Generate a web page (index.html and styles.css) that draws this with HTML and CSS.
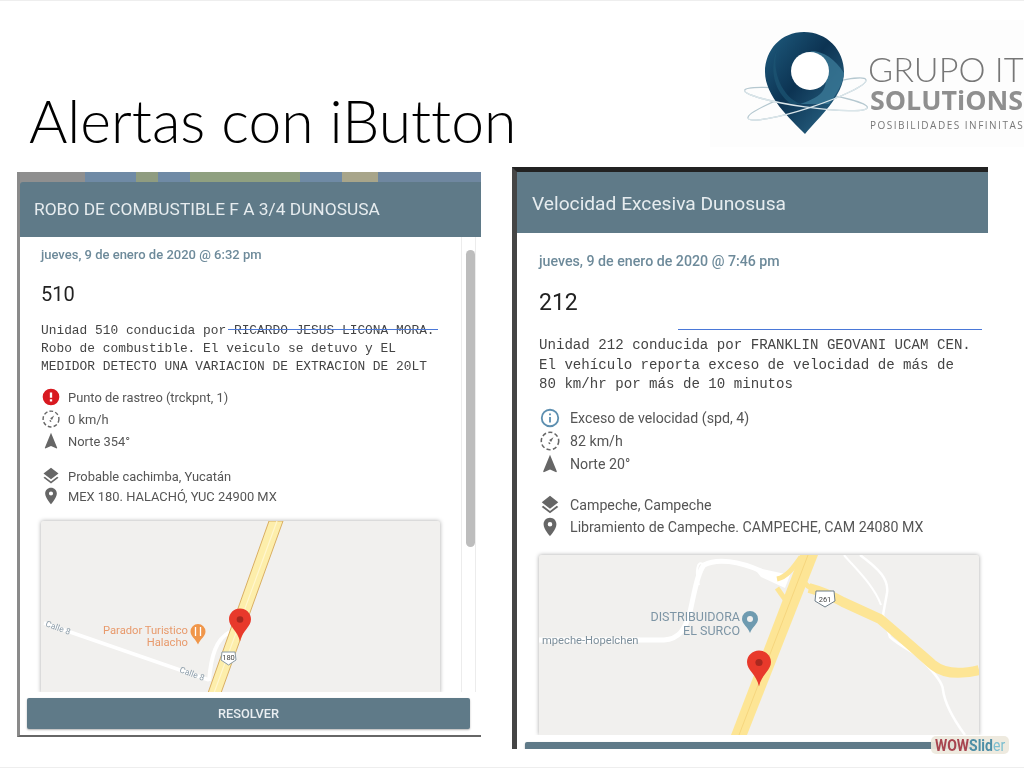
FILE: index.html
```html
<!DOCTYPE html>
<html lang="es">

<head>
    <meta charset="UTF-8">
    <meta name="viewport" content="width=device-width, initial-scale=1.0">
    <title>Alertas con iButton</title>
    <link rel="stylesheet" href="styles.css">
</head>

<body>
    <svg class="icon-defs" width="0" height="0">
        <symbol id="i-error" viewBox="0 0 24 24"><path fill="#d81920" d="M12 2a10 10 0 1 0 0 20 10 10 0 0 0 0-20zm1.4 15.4h-2.8v-2.6h2.8zm0-4.6h-2.8V6.600h2.800z"/></symbol>
        <symbol id="i-info" viewBox="0 0 24 24"><path fill="#5d8fb0" d="M11 7h2v2h-2zm0 4h2v6h-2zm1-9a10 10 0 1 0 0 20 10 10 0 0 0 0-20zm0 18a8 8 0 1 1 0-16 8 8 0 0 1 0 16z"/></symbol>
        <symbol id="i-speed" viewBox="0 0 24 24"><circle cx="12" cy="12" r="9.5" fill="none" stroke="#666" stroke-width="1.7" stroke-dasharray="4.5 2.6"/><path fill="#666" d="M15.8 7.8l-2.6 5.4-2.2-2.2zM11 13a1.2 1.2 0 1 0 1.6 1.6z"/></symbol>
        <symbol id="i-nav" viewBox="0 0 24 24"><path fill="#666" d="M12 2L4.5 20.3l.7.7L12 18l6.8 3 .7-.7z"/></symbol>
        <symbol id="i-layers" viewBox="0 0 24 24"><path fill="#666" d="M12 18.5l-7.4-5.7L3 14.1l9 7 9-7-1.6-1.3zM12 16l7.4-5.7L21 9l-9-7-9 7 1.6 1.3z"/></symbol>
        <symbol id="i-place" viewBox="0 0 24 24"><path fill="#666" d="M12 2C8.1 2 5 5.1 5 9c0 5.3 7 13 7 13s7-7.7 7-13c0-3.9-3.1-7-7-7zm0 9.5a2.5 2.5 0 1 1 0-5 2.5 2.5 0 0 1 0 5z"/></symbol>
        <symbol id="i-marker" viewBox="0 0 24 36"><path fill="#e8392b" d="M12 0C5.4 0 0 5.2 0 11.6 0 20 9.5 24 12 36 14.5 24 24 20 24 11.6 24 5.2 18.6 0 12 0z"/><circle cx="12" cy="12" r="3.6" fill="#a8281f"/></symbol>
    </svg>

    <div class="slide">
        <div class="slide-head">
            <h1 class="slide-title">Alertas con iButton</h1>
            <div class="logo">
                <svg class="logo-mark" viewBox="0 0 160 127">
                    <defs>
                        <linearGradient id="pinGrad" x1="0" y1="0" x2="1" y2="1">
                            <stop offset="0" stop-color="#1f5d80"/>
                            <stop offset=".45" stop-color="#0c3352"/>
                            <stop offset="1" stop-color="#2f6d8e"/>
                        </linearGradient>
                    </defs>
                    <g fill="none" stroke="#b5c8d0" stroke-width="1.300">
                        <ellipse cx="97" cy="79" rx="62" ry="9" transform="rotate(-18 97 79)"/>
                        <ellipse cx="96" cy="79" rx="62" ry="8" transform="rotate(8 96 79)"/>
                    </g>
                    <path fill="url(#pinGrad)" d="M94 12C71 12 55 30 55 52c0 24 25 47 40 62 14-17 39-38 39-62 0-22-17-40-40-40z"/>
                    <path fill="#3a7896" opacity=".8" d="M100 31c14 0 25 8 34 22-1 10-6 19-15 31H90c6-2 17-6 22-12 8-10 4-32-12-41z"/>
                    <path fill="#1d5573" d="M67 30c-8 18-3 42 14 54h10c-18-6-30-32-24-54z" opacity=".7"/>
                    <circle cx="100" cy="51" r="19" fill="#fff"/>
                    <g fill="none" stroke="#dbe6ea" stroke-width="1.300">
                        <path d="M-62 0A62 9 0 0 0 62 0" transform="translate(97 79) rotate(-18)"/>
                        <path d="M-62 0A62 8 0 0 0 62 0" transform="translate(96 79) rotate(8)"/>
                    </g>
                </svg>
                <div class="logo-text">
                    <div class="logo-name">GRUPO IT</div>
                    <div class="logo-sub">SOLUTiONS</div>
                    <div class="logo-tag">POSIBILIDADES INFINITAS</div>
                </div>
            </div>
        </div>

        <div class="panels">
            <section class="panel panel-left">
                <header class="panel-head">ROBO DE COMBUSTIBLE F A 3/4 DUNOSUSA</header>
                <div class="panel-main">
                    <div class="panel-body">
                        <div class="date">jueves, 9 de enero de 2020 @ 6:32 pm</div>
                        <div class="unit">510</div>
                        <p class="message">Unidad 510 conducida por RICARDO JESUS LICONA MORA.<br>Robo de combustible. El veiculo se detuvo y EL<br>MEDIDOR DETECTO UNA VARIACION DE EXTRACION DE 20LT</p>
                        <ul class="rows">
                            <li><svg class="icon"><use href="#i-error"/></svg>Punto de rastreo (trckpnt, 1)</li>
                            <li><svg class="icon"><use href="#i-speed"/></svg>0 km/h</li>
                            <li><svg class="icon"><use href="#i-nav"/></svg>Norte 354°</li>
                        </ul>
                        <ul class="rows rows-place">
                            <li><svg class="icon"><use href="#i-layers"/></svg>Probable cachimba, Yucatán</li>
                            <li><svg class="icon"><use href="#i-place"/></svg>MEX 180. HALACHÓ, YUC 24900 MX</li>
                        </ul>
                        <div class="map">
                            <svg class="map-svg" viewBox="0 0 399 172">
                                <path d="M3 102L168 159" stroke="#fff" stroke-width="3.500" fill="none"/>
                                <path d="M168 160C170 135 175 118 189 111" stroke="#fff" stroke-width="4" fill="none"/>
                                <path d="M228 0H242L180 172H167z" fill="#fdeeab" stroke="#d9ae62" stroke-width="1"/>
                                <path d="M236 0L173 172" stroke="#fff6cf" stroke-width="1.200"/>
                                <text class="map-road" transform="translate(4 105) rotate(20)">Calle 8</text>
                                <text class="map-road" transform="translate(138 151) rotate(20)">Calle 8</text>
                                <text class="map-poi" x="147" y="113" text-anchor="end">Parador Turistico</text>
                                <text class="map-poi" x="147" y="125" text-anchor="end">Halacho</text>
                                <path d="M157 103a7.500 7.500 0 0 0-7.500 7.500c0 5 5 7 7.500 13 2.500-6 7.500-8 7.500-13a7.500 7.500 0 0 0-7.500-7.500z" fill="#f0964a"/>
                                <path d="M154.500 106v9M159.500 106v9" stroke="#fff" stroke-width="1.300"/>
                                <path d="M181 131h13l1 8-7.500 5-7.500-5z" fill="#fff" stroke="#8a9aa5"/>
                                <text class="map-shield" x="187.500" y="139" text-anchor="middle">180</text>
                                <use href="#i-marker" x="188" y="87" width="22" height="34"/>
                            </svg>
                        </div>
                    </div>
                    <div class="scrollbar"><div class="scroll-thumb"></div></div>
                </div>
                <footer class="panel-foot"><button class="resolve">RESOLVER</button></footer>
                <div class="pen-line"></div>
            </section>

            <section class="panel panel-right">
                <header class="panel-head">Velocidad Excesiva Dunosusa</header>
                <div class="panel-main">
                    <div class="panel-body">
                        <div class="date">jueves, 9 de enero de 2020 @ 7:46 pm</div>
                        <div class="unit">212</div>
                        <p class="message">Unidad 212 conducida por FRANKLIN GEOVANI UCAM CEN.<br>El vehículo reporta exceso de velocidad de más de<br>80 km/hr por más de 10 minutos</p>
                        <ul class="rows">
                            <li><svg class="icon"><use href="#i-info"/></svg>Exceso de velocidad (spd, 4)</li>
                            <li><svg class="icon"><use href="#i-speed"/></svg>82 km/h</li>
                            <li><svg class="icon"><use href="#i-nav"/></svg>Norte 20°</li>
                        </ul>
                        <ul class="rows rows-place">
                            <li><svg class="icon"><use href="#i-layers"/></svg>Campeche, Campeche</li>
                            <li><svg class="icon"><use href="#i-place"/></svg>Libramiento de Campeche. CAMPECHE, CAM 24080 MX</li>
                        </ul>
                        <div class="map">
                            <svg class="map-svg" viewBox="0 0 440 180">
                                <g fill="none" stroke="#fff">
                                    <path d="M222 16C200 6 178 3 165 10 158 18 155 40 151 57 146 75 140 84 125 85H0" stroke-width="5"/>
                                    <path d="M165 10C158 3 156 18 160 30" stroke-width="2"/>
                                    <path d="M321 0C340 14 350 24 348 38L344 60 351 82C362 92 374 96 381 103 396 118 404 128 404 135 406 150 415 165 426 180" stroke-width="2.500"/>
                                    <path d="M305 0C315 12 335 30 342 50" stroke-width="2"/>
                                </g>
                                <path d="M214 12L251 20 246 33 222 22z" fill="#fff"/>
                                <g fill="none" stroke="#fde595">
                                    <path d="M270 33C285 37 295 42 304 47L341 64C360 80 378 96 394 110 404 118 420 120 440 115" stroke-width="10"/>
                                    <path d="M238 24C248 22 255 12 262 2" stroke-width="5"/>
                                    <path d="M238 33L250 50" stroke-width="5"/>
                                    <path d="M264 25C268 32 272 34 280 34" stroke-width="5"/>
                                </g>
                                <path d="M261 0H279L208 180H192z" fill="#fde595"/>
                                <path d="M269 0L200 180" stroke="#f6d67e" stroke-width="1"/>
                                <text class="map-label" x="201" y="66" text-anchor="end">DISTRIBUIDORA</text>
                                <text class="map-label" x="201" y="80" text-anchor="end">EL SURCO</text>
                                <text class="map-road-name" x="3" y="89">mpeche-Hopelchen</text>
                                <path d="M211 56a8 8 0 0 0-8 8c0 5 6 8 8 14 2-6 8-9 8-14a8 8 0 0 0-8-8z" fill="#6f9bb0"/>
                                <circle cx="211" cy="64" r="3" fill="#f1f0ee"/>
                                <path d="M277 36h18l1 10-10 6-10-6z" fill="#fff" stroke="#6f7f8a"/>
                                <text class="map-shield" x="286" y="47" text-anchor="middle">261</text>
                                <use href="#i-marker" x="208" y="94" width="24" height="39"/>
                            </svg>
                        </div>
                    </div>
                </div>
                <footer class="panel-foot"><button class="resolve"></button></footer>
                <div class="pen-line"></div>
            </section>
        </div>

        <div class="wow-badge"><span class="wow-text"><span class="wow-a">WOW</span><span class="wow-b">Slid</span><span class="wow-c">er</span></span></div>
    </div>
</body>

</html>
```

FILE: styles.css
```css
/* Slide */
body {
    margin: 0;
    padding: 0;
    background-color: #fff;
    font-family: Roboto, Arial, sans-serif;
}

.icon-defs {
    position: absolute;
}

.slide {
    position: relative;
    width: 1024px;
    height: 768px;
    box-sizing: border-box;
    overflow: hidden;
    background-color: #fff;
    border-top: 1px solid #eee;
    border-bottom: 1px solid #eee;
    filter: blur(0.4px);
}

.slide-head {
    display: flex;
    justify-content: space-between;
    height: 166px;
}

.slide-title {
    margin: 0;
    padding: 85px 0 0 29px;
    font-family: Lato, sans-serif;
    font-weight: 300;
    font-size: 58.8px;
    font-variant-ligatures: none;
    line-height: 70px;
    white-space: nowrap;
    color: #000;
}

/* Logo */
.logo {
    display: flex;
    flex-shrink: 0;
    width: 314px;
    height: 127px;
    margin-top: 19px;
    background-color: #fdfdfd;
}

.logo-mark {
    flex-shrink: 0;
    width: 160px;
    height: 127px;
}

.logo-text {
    color: #8a8a8a;
    white-space: nowrap;
}

.logo-name {
    margin: 31px 0 0 -2px;
    font-family: Lato, sans-serif;
    font-weight: 300;
    font-size: 34.2px;
    line-height: 36px;
    color: #777;
}

.logo-sub {
    margin-top: -2px;
    font-family: "Open Sans", sans-serif;
    font-weight: 700;
    font-size: 26.8px;
    line-height: 30px;
    color: #8f8f8f;
}

.logo-tag {
    margin-top: 3px;
    font-family: "Open Sans", sans-serif;
    font-size: 10px;
    line-height: 14px;
    letter-spacing: 1.5px;
    color: #777;
}

/* Panels */
.panels {
    display: flex;
    gap: 31px;
    padding-left: 17px;
}

.panel {
    position: relative;
    display: flex;
    flex-direction: column;
    box-sizing: border-box;
    overflow: hidden;
    background-color: #fff;
}

.panel-head {
    flex-shrink: 0;
    display: flex;
    align-items: center;
    box-sizing: border-box;
    background-color: #5f7a88;
    color: #e6ecef;
}

.panel-main {
    display: flex;
    flex: 1;
    min-height: 0;
    overflow: hidden;
}

.panel-body {
    flex: 1;
    min-width: 0;
}

.date {
    font-weight: 500;
    color: #6d8a9a;
    line-height: 18px;
}

.unit {
    color: #222;
}

.message {
    margin: 0;
    font-family: "Liberation Mono", monospace;
    color: #444;
    white-space: nowrap;
}

.rows {
    margin: 0;
    padding: 0;
    list-style: none;
    color: #555;
}

.rows li {
    display: flex;
    align-items: center;
    white-space: nowrap;
}

.map {
    background-color: #f1f0ee;
    box-shadow: 0 0 4px rgba(0, 0, 0, 0.35);
    border-radius: 2px 2px 0 0;
}

.map-svg {
    display: block;
    width: 100%;
    height: 100%;
}

.map-road {
    font-size: 8.5px;
    fill: #8a9ba8;
}

.map-poi {
    font-size: 11.2px;
    fill: #e89a6c;
}

.map-label {
    font-size: 12.5px;
    fill: #7d95a5;
}

.map-road-name {
    font-size: 11.2px;
    fill: #7d8f9b;
}

.map-shield {
    font-size: 7.5px;
    fill: #444;
}

.panel-foot {
    flex-shrink: 0;
    background-color: #fff;
}

.resolve {
    display: block;
    padding: 0;
    border: none;
    border-radius: 2px;
    background-color: #5f7a88;
    color: #e9eef1;
    font-family: Roboto, Arial, sans-serif;
    font-size: 12.8px;
    font-weight: 500;
    box-shadow: 0 1px 2px rgba(0, 0, 0, 0.3);
}

.pen-line {
    position: absolute;
    height: 1px;
    background-color: #4a78d8;
}

/* Left capture */
.panel-left {
    width: 464px;
    height: 565px;
    margin-top: 5px;
    padding-top: 10px;
    border-left: 3px solid #8a8a8a;
    border-bottom: 2px solid #666;
    background: linear-gradient(90deg, #8f8f8f 65px, #6f8aa5 65px, #6f8aa5 116px, #8f9c80 116px, #8f9c80 138px, #6f8aa5 138px, #6f8aa5 170px, #8fa080 170px, #8fa080 280px, #6f8aa5 280px, #6f8aa5 322px, #a8a58a 322px, #a8a58a 358px, #6f87a0 358px);
}

.panel-left .panel-head {
    height: 55px;
    padding: 0 0 2px 14px;
    font-size: 17.35px;
    border-top-left-radius: 3px;
}

.panel-left .panel-main {
    background-color: #fff;
}

.panel-left .panel-body {
    padding: 9px 0 0 21px;
    font-size: 13px;
}

.panel-left .unit {
    margin-top: 18px;
    font-size: 20px;
    line-height: 24px;
}

.panel-left .message {
    margin-top: 16px;
    font-size: 12.87px;
    line-height: 18px;
}

.panel-left .rows {
    margin-top: 10px;
    font-size: 12.9px;
}

.panel-left .rows li {
    height: 22px;
}

.panel-left .rows-place {
    margin-top: 14px;
}

.panel-left .rows-place li {
    height: 20px;
}

.panel-left .icon {
    flex-shrink: 0;
    width: 20px;
    height: 20px;
    margin-right: 7px;
}

.panel-left .map {
    width: 399px;
    height: 172px;
    margin-top: 15px;
}

.scrollbar {
    flex-shrink: 0;
    box-sizing: border-box;
    width: 15px;
    margin-right: 5px;
    padding: 13px 0 0 4px;
    border-left: 1px solid #ececec;
    border-right: 1px solid #ececec;
}

.scroll-thumb {
    width: 9px;
    height: 297px;
    border-radius: 5px;
    background-color: #bdbdbd;
}

.panel-left .panel-foot {
    height: 43px;
    padding: 6px 0 0 7px;
    box-sizing: border-box;
    background-color: #fff;
}

.panel-left .resolve {
    width: 443px;
    height: 31px;
}

.panel-left .pen-line {
    top: 157px;
    left: 208px;
    width: 210px;
}

/* Right capture */
.panel-right {
    width: 476px;
    height: 582px;
    border-left: 5px solid #454545;
    border-top: 5px solid #222;
}

.panel-right .panel-head {
    height: 61px;
    padding: 2px 0 0 15px;
    font-size: 19.2px;
}

.panel-right .panel-body {
    padding: 19px 0 0 22px;
    font-size: 14.2px;
}

.panel-right .unit {
    margin-top: 19px;
    font-size: 23px;
    line-height: 28px;
}

.panel-right .message {
    margin-top: 19px;
    font-size: 14.12px;
    line-height: 19.5px;
}

.panel-right .rows {
    margin-top: 12px;
    font-size: 14.2px;
}

.panel-right .rows li {
    height: 23px;
}

.panel-right .rows-place {
    margin-top: 18px;
}

.panel-right .rows-place li {
    height: 22px;
}

.panel-right .icon {
    flex-shrink: 0;
    width: 22px;
    height: 22px;
    margin-right: 9px;
}

.panel-right .map {
    width: 440px;
    height: 180px;
    margin-top: 17px;
}

.panel-right .panel-foot {
    height: 14px;
    padding: 7px 0 0 8px;
    box-sizing: border-box;
}

.panel-right .resolve {
    width: 450px;
    height: 7px;
    border-radius: 2px 2px 0 0;
}

.panel-right .pen-line {
    top: 157px;
    left: 161px;
    width: 304px;
}

/* Watermark */
.wow-badge {
    position: absolute;
    left: 931px;
    top: 735px;
    width: 78px;
    height: 18px;
    border-radius: 5px;
    background-color: rgba(237, 232, 220, 0.92);
    font-family: "Liberation Sans Narrow", "Roboto", sans-serif;
    font-size: 14px;
    font-weight: 700;
    line-height: 18px;
    text-align: center;
}

.wow-text {
    display: inline-block;
    transform: scaleY(1.2);
}

.wow-a {
    color: #a8454f;
}

.wow-b {
    color: #4d8ea6;
}

.wow-c {
    color: #7dbfd0;
    font-weight: 400;
}
```
